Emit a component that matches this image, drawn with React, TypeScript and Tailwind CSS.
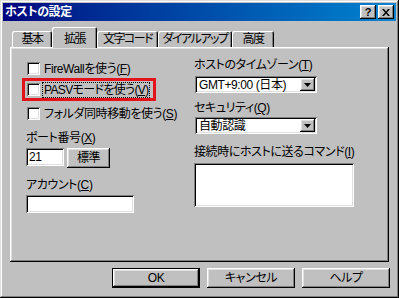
import React from "react";

const raised =
  "shadow-[inset_-1px_-1px_0_#000,inset_1px_1px_0_#fff,inset_-2px_-2px_0_#808080,inset_2px_2px_0_#dfdfdf]";
const sunken =
  "shadow-[inset_1px_1px_0_#808080,inset_-1px_-1px_0_#fff,inset_2px_2px_0_#000,inset_-2px_-2px_0_#dfdfdf]";

function Key({ k }: { k: string }) {
  return (
    <>
      (<span className="underline underline-offset-[1px]">{k}</span>)
    </>
  );
}

function Check({ children, focus }: { children: React.ReactNode; focus?: boolean }) {
  return (
    <div className="flex items-center h-[13px]">
      <span className={`ml-[1px] w-[13px] h-[13px] bg-white shrink-0 ${sunken}`} />
      <span
        className={`ml-[3px] px-[1px] whitespace-nowrap ${
          focus ? "tracking-[-0.65px] outline outline-1 outline-dotted outline-black" : ""
        }`}
      >
        {children}
      </span>
    </div>
  );
}

function Arrow() {
  return (
    <svg width="7" height="4" viewBox="0 0 7 4">
      <path d="M0 0h7L3.5 4z" fill="#000" />
    </svg>
  );
}

function Select({ value }: { value: string }) {
  return (
    <div className={`ml-[1px] w-[122px] h-[17px] bg-white flex items-center ${sunken}`}>
      <span className="flex-1 pl-[4px] whitespace-nowrap">{value}</span>
      <span className={`w-[15px] h-[13px] mr-[2px] bg-[#c0c0c0] flex items-center justify-center ${raised}`}>
        <Arrow />
      </span>
    </div>
  );
}

function Tab({ label, w, active }: { label: string; w: string; active?: boolean }) {
  if (active) {
    return (
      <div
        className={`${w} h-[21px] -mb-[1px] bg-[#c0c0c0] rounded-t-[2px] flex justify-center pt-[5px] whitespace-nowrap tracking-[-1.5px] shadow-[inset_1px_1px_0_#fff,inset_-1px_0_0_#000,inset_-2px_0_0_#808080]`}
      >
        {label}
      </div>
    );
  }
  return (
    <div
      className={`${w} h-[16px] rounded-t-[2px] flex justify-center pt-[1px] whitespace-nowrap tracking-[-1.5px] shadow-[inset_1px_1px_0_#fff,inset_-1px_0_0_#000,inset_-2px_0_0_#808080]`}
    >
      {label}
    </div>
  );
}

function Button({ children, primary }: { children: React.ReactNode; primary?: boolean }) {
  return (
    <div
      className={`w-[88px] h-[20px] flex items-center justify-center ${
        primary
          ? "shadow-[inset_0_0_0_1px_#000,inset_-2px_-2px_0_#000,inset_2px_2px_0_#fff,inset_-3px_-3px_0_#808080,inset_3px_3px_0_#dfdfdf]"
          : raised
      }`}
    >
      {children}
    </div>
  );
}

export default function App() {
  return (
    <div className="w-[399px] h-[298px] bg-[#c0c0c0] p-[3px] flex flex-col text-black text-[12px] leading-[14px] tracking-[-0.4px] font-['Liberation_Sans','Noto_Sans_CJK_JP',sans-serif] [font-feature-settings:'palt'] shadow-[inset_-1px_-1px_0_#000,inset_1px_1px_0_#dfdfdf,inset_-2px_-2px_0_#808080,inset_2px_2px_0_#fff]">
      {/* title bar */}
      <div className="h-[18px] flex items-center bg-linear-to-r from-[#000080] to-[#1084d0] pl-[2px] pr-[2px]">
        <span className="flex-1 text-white font-bold">ホストの設定</span>
        <span className={`w-[16px] h-[14px] bg-[#c0c0c0] flex items-center justify-center font-bold text-[11px] ${raised}`}>
          ?
        </span>
        <span className={`ml-[2px] w-[16px] h-[14px] bg-[#c0c0c0] flex items-center justify-center ${raised}`}>
          <svg width="8" height="7" viewBox="0 0 8 7">
            <path d="M0 0h2l2 2.5L6 0h2L5 3.5 8 7H6L4 4.5 2 7H0l3-3.5z" fill="#000" />
          </svg>
        </span>
      </div>

      {/* tabs */}
      <div className="relative z-10 flex items-end h-[26px] pl-[9px]">
        <Tab label="基本" w="w-[40px]" />
        <Tab label="拡張" w="w-[45px]" active />
        <Tab label="文字コード" w="w-[61px]" />
        <Tab label="ダイアルアップ" w="w-[74px]" />
        <Tab label="高度" w="w-[42px]" />
      </div>

      {/* panel */}
      <div className="ml-[7px] w-[379px] h-[215px] flex shadow-[inset_-1px_-1px_0_#000,inset_1px_1px_0_#fff,inset_-2px_-2px_0_#808080,inset_2px_2px_0_#dfdfdf]">
        <div className="w-[184px] pl-[16px] flex flex-col">
          <div className="mt-[15px]">
            <Check>
              FireWallを使う<Key k="F" />
            </Check>
          </div>
          <div className="mt-[8px] relative">
            <Check focus>
              PASVモードを使う<Key k="V" />
            </Check>
            <span className="absolute left-[-4px] top-[-5px] w-[134px] h-[23px] border-[3px] border-[#e3121b]" />
          </div>
          <div className="mt-[11px]">
            <Check>
              フォルダ同時移動を使う<Key k="S" />
            </Check>
          </div>
          <div className="mt-[11px] h-[14px] whitespace-nowrap">
            ポート番号<Key k="X" />
          </div>
          <div className="mt-[3px] flex items-start">
            <div className={`w-[38px] h-[18px] bg-white pl-[3px] flex items-center ${sunken}`}>21</div>
            <div className={`ml-[3px] w-[43px] h-[20px] flex items-center justify-center ${raised}`}>標準</div>
          </div>
          <div className="mt-[10px] h-[14px] whitespace-nowrap">
            アカウント<Key k="C" />
          </div>
          <div className={`mt-[3px] w-[108px] h-[18px] bg-white ${sunken}`} />
        </div>

        <div className="flex flex-col pt-[11px]">
          <div className="h-[14px] whitespace-nowrap">
            ホストのタイムゾーン<Key k="T" />
          </div>
          <div className="mt-[4px]">
            <Select value="GMT+9:00 (日本)" />
          </div>
          <div className="mt-[8px] h-[14px] whitespace-nowrap">
            セキュリティ<Key k="Q" />
          </div>
          <div className="mt-[2px]">
            <Select value="自動認識" />
          </div>
          <div className="mt-[11px] h-[14px] whitespace-nowrap">
            接続時にホストに送るコマンド<Key k="I" />
          </div>
          <div className={`mt-[4px] w-[160px] h-[44px] bg-white ${sunken}`} />
        </div>
      </div>

      {/* buttons */}
      <div className="mt-[6px] flex justify-end gap-[7px] pr-[6px]">
        <Button primary>OK</Button>
        <Button>キャンセル</Button>
        <Button>ヘルプ</Button>
      </div>
    </div>
  );
}
